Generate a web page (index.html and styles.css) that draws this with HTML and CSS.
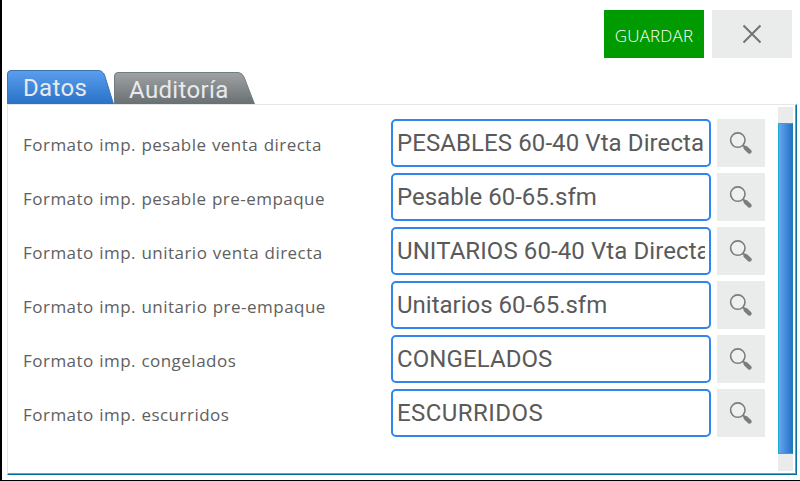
FILE: index.html
```html
<!DOCTYPE html>
<html lang="es">
<head>
<meta charset="utf-8">
<title>Formatos</title>
<link rel="stylesheet" href="styles.css">
</head>
<body>
<svg width="0" height="0" class="defs">
  <defs>
    <linearGradient id="blue" x1="0" y1="0" x2="0" y2="1"><stop offset="0" stop-color="#5b9eee"/><stop offset="1" stop-color="#2872c8"/></linearGradient>
    <linearGradient id="gray" x1="0" y1="0" x2="0" y2="1"><stop offset="0" stop-color="#a0a2a2"/><stop offset="1" stop-color="#687073"/></linearGradient>
    <symbol id="search" viewBox="0 0 48 48">
      <circle cx="20.8" cy="21.1" r="7.2" fill="#eff0f0" stroke="#7c7c7c" stroke-width="1.6"/>
      <path d="M26 26.300l3 3" stroke="#7c7c7c" stroke-width="2"/>
      <path d="M28.600 28.900l4 3.700" stroke="#7c7c7c" stroke-width="4.200" stroke-linecap="round"/>
    </symbol>
  </defs>
</svg>
<div class="window">
  <header class="actions">
    <button class="save">GUARDAR</button>
    <button class="close" aria-label="Cerrar"><svg width="20" height="20" viewBox="0 0 20 20"><path d="M1.5 1.500l17 17M18.500 1.500L1.500 18.500" stroke="#727272" stroke-width="2"/></svg></button>
  </header>
  <nav class="tabs">
    <div class="tab active"><svg class="shape" width="107" height="34"><path d="M.5 34V4Q.5.5 4 .5H91Q95.500 .5 97.500 5L106.500 34" fill="url(#blue)" stroke="#3f73ac"/></svg><span>Datos</span></div>
    <div class="tab"><svg class="shape" width="141" height="32"><path d="M.5 32V4Q.5.5 4 .5H124Q128 .5 130 5L140.500 32" fill="url(#gray)" stroke="#6f7e80"/></svg><span>Auditoría</span></div>
  </nav>
  <main class="panel">
    <div class="rows">
      <div class="row"><label>Formato imp. pesable venta directa</label><div class="field caps"><span>PESABLES 60-40 Vta Directa</span></div><button class="find"><svg width="48" height="48"><use href="#search"/></svg></button></div>
      <div class="row"><label>Formato imp. pesable pre-empaque</label><div class="field"><span>Pesable 60-65.sfm</span></div><button class="find"><svg width="48" height="48"><use href="#search"/></svg></button></div>
      <div class="row"><label>Formato imp. unitario venta directa</label><div class="field caps"><span>UNITARIOS 60-40 Vta Directa</span></div><button class="find"><svg width="48" height="48"><use href="#search"/></svg></button></div>
      <div class="row"><label>Formato imp. unitario pre-empaque</label><div class="field"><span>Unitarios 60-65.sfm</span></div><button class="find"><svg width="48" height="48"><use href="#search"/></svg></button></div>
      <div class="row"><label>Formato imp. congelados</label><div class="field caps"><span>CONGELADOS</span></div><button class="find"><svg width="48" height="48"><use href="#search"/></svg></button></div>
      <div class="row"><label>Formato imp. escurridos</label><div class="field wide"><span>ESCURRIDOS</span></div><button class="find"><svg width="48" height="48"><use href="#search"/></svg></button></div>
    </div>
    <div class="scrollbar"><div class="thumb"></div></div>
  </main>
</div>
</body>
</html>
```
FILE: styles.css
```css
* { box-sizing: border-box; }
body { margin: 0; background: #fff; overflow: hidden; }
.defs { position: absolute; }
button { border: 0; padding: 0; border-radius: 0; }
.window {
  width: 800px; height: 481px; padding: 10px 3px 0 5px;
  border-left: 2px solid #000; border-bottom: 1px solid #000;
}
.actions { display: flex; justify-content: flex-end; gap: 8px; height: 48px; padding-right: 5px; }
.save {
  width: 100px; background: #009b00; color: #fff;
  font: 300 17px "Open Sans", sans-serif; letter-spacing: .2px; padding-top: 3px;
}
.close { width: 80px; background: #eaeceb; display: flex; align-items: center; justify-content: center; }
.tabs { display: flex; align-items: flex-end; height: 34px; margin-top: 12px; }
.tab {
  position: relative; width: 141px; height: 32px; padding: 4px 0 0 15px;
  font: 24px/28px Roboto, sans-serif; letter-spacing: .35px; color: #e8eaec;
}
.tab.active { width: 107px; height: 34px; padding-left: 16px; }
.shape { position: absolute; left: 0; top: 0; }
.tab span { position: relative; }
.panel {
  display: flex; width: 790px; height: 371px; padding: 2px 3px 2px 0;
  border: 1px solid #e6e8e8; border-right-color: #0872a0; border-bottom-color: #006b9e;
  box-shadow: inset -1px -1px #929292;
}
.rows { display: flex; flex-direction: column; gap: 6px; padding: 12px 13px 0 15px; width: 770px; }
.row { display: flex; align-items: center; height: 48px; }
label {
  width: 368px; white-space: nowrap; padding-top: 3px;
  font: 17px/24px "Open Sans", sans-serif; letter-spacing: .48px; word-spacing: .5px; color: #606060;
}
.field {
  width: 320px; height: 48px; padding: 0 4px; margin-right: 6px;
  border: 2px solid #2f86ed; border-radius: 5px;
  font: 24px/45px Roboto, sans-serif; color: #5a5a5a;
}
.field.caps { letter-spacing: .09px; }
.field.wide { letter-spacing: .45px; }
.field span { display: block; overflow: hidden; white-space: nowrap; }
.find { width: 48px; height: 48px; background: #eaeceb; }
.find svg { display: block; }
.scrollbar { width: 15px; height: 364px; background: #eaeceb; padding-top: 16px; }
.thumb {
  height: 331px; border: 1px solid #20acd4; border-right-color: #167fb5;
  background: linear-gradient(90deg, #64a5f0, #2871c6);
}
```
